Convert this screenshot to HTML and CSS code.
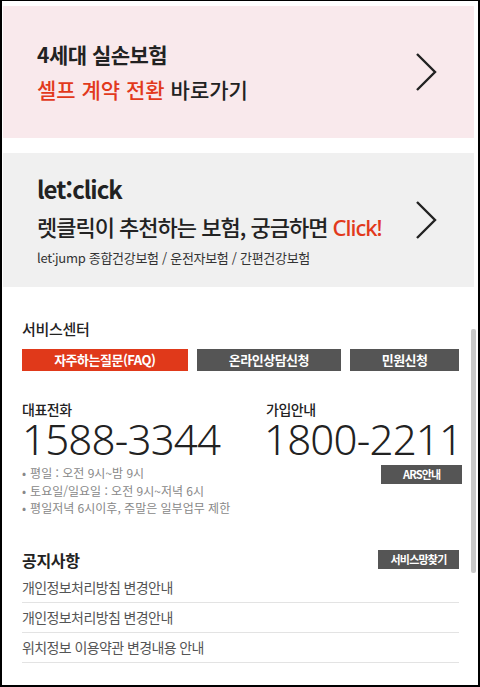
FILE: index.html
```html
<!DOCTYPE html>
<html lang="ko">
<head>
  <meta charset="UTF-8">
  <title>고객센터</title>
  <link rel="stylesheet" href="styles.css">
</head>
<body>
  <div class="frame">
    <a class="promo promo-pink" href="#">
      <div class="promo-text">
        <p class="promo-title">4세대 실손보험</p>
        <p class="promo-line"><span class="red">셀프 계약 전환</span> 바로가기</p>
      </div>
      <svg class="chevron" width="22" height="40" viewBox="0 0 22 40"><polyline points="2,2 20,20 2,38" fill="none" stroke="#222" stroke-width="2.4"/></svg>
    </a>

    <a class="promo promo-gray" href="#">
      <div class="promo-text">
        <p class="brand">let:click</p>
        <p class="promo-big">렛클릭이 추천하는 보험, 궁금하면 <span class="red click">Click!</span></p>
        <p class="promo-sub">let:jump 종합건강보험 / 운전자보험 / 간편건강보험</p>
      </div>
      <svg class="chevron" width="22" height="40" viewBox="0 0 22 40"><polyline points="2,2 20,20 2,38" fill="none" stroke="#222" stroke-width="2.4"/></svg>
    </a>

    <section class="service">
      <h2 class="section-title">서비스센터</h2>
      <div class="tabs">
        <a class="tab tab-active" href="#">자주하는질문(FAQ)</a>
        <a class="tab" href="#">온라인상담신청</a>
        <a class="tab" href="#">민원신청</a>
      </div>

      <div class="phones">
        <div class="phone">
          <h3 class="phone-label">대표전화</h3>
          <p class="number">1588-3344</p>
          <ul class="hours">
            <li>평일 : 오전 9시~밤 9시</li>
            <li>토요일/일요일 : 오전 9시~저녁 6시</li>
            <li>평일저녁 6시이후, 주말은 일부업무 제한</li>
          </ul>
        </div>
        <div class="phone phone-right">
          <h3 class="phone-label">가입안내</h3>
          <p class="number">1800-2211</p>
          <a class="small-btn" href="#">ARS안내</a>
        </div>
      </div>

      <div class="notice">
        <div class="notice-head">
          <h2 class="section-title bold">공지사항</h2>
          <a class="small-btn" href="#">서비스망찾기</a>
        </div>
        <ul class="notice-list">
          <li>개인정보처리방침 변경안내</li>
          <li>개인정보처리방침 변경안내</li>
          <li>위치정보 이용약관 변경내용 안내</li>
        </ul>
      </div>

      <div class="scroll-thumb"></div>
    </section>
  </div>
</body>
</html>
```

FILE: styles.css
```css
html, body {
  margin: 0;
  padding: 0;
  background: #fff;
}
body {
  font-family: "Noto Sans CJK KR", "Noto Sans", sans-serif;
  color: #222;
}
p, h2, h3, ul {
  margin: 0;
  padding: 0;
}
a {
  text-decoration: none;
  color: inherit;
}
.frame {
  position: relative;
  width: 480px;
  height: 687px;
  box-sizing: border-box;
  border: 2px solid #000;
  border-top-width: 1px;
  padding: 5px 4px 0 1px;
  overflow: hidden;
}
.promo {
  display: flex;
  align-items: center;
  justify-content: space-between;
  padding: 0 37px 0 34px;
}
.promo-pink {
  background: #f9e9ec;
  height: 132px;
}
.promo-gray {
  background: #f0f0f0;
  height: 134px;
  margin-top: 15px;
}
.red {
  color: #e2391c;
}
.promo-title {
  font-size: 21px;
  font-weight: bold;
  line-height: 35px;
  letter-spacing: -0.5px;
}
.promo-line {
  font-size: 21px;
  font-weight: 500;
  line-height: 35px;
}
.brand {
  font-size: 24px;
  font-weight: bold;
  line-height: 34px;
  letter-spacing: -1px;
}
.promo-big {
  font-size: 22px;
  font-weight: 500;
  line-height: 40px;
  letter-spacing: -1px;
}
.click {
  font-family: "Noto Sans", sans-serif;
}
.promo-sub {
  font-size: 13px;
  line-height: 22px;
  letter-spacing: -0.3px;
  color: #333;
}
.chevron {
  flex: none;
}

.service {
  padding: 32px 15px 0 19px;
}
.section-title {
  font-size: 15px;
  font-weight: 500;
  line-height: 20px;
  letter-spacing: -0.3px;
}
.section-title.bold {
  font-weight: bold;
  font-size: 16px;
}
.tabs {
  display: grid;
  grid-template-columns: 166fr 145fr 109fr;
  gap: 9px;
  margin-top: 10px;
}
.tab {
  display: block;
  height: 22px;
  line-height: 22px;
  text-align: center;
  background: #555;
  color: #fff;
  font-size: 13px;
  font-weight: bold;
  letter-spacing: -0.5px;
}
.tab-active {
  background: #e0391a;
}
.phones {
  display: grid;
  grid-template-columns: 242px 1fr;
  margin-top: 30px;
}
.phone-label {
  font-size: 14px;
  font-weight: 500;
  line-height: 16px;
  letter-spacing: -0.5px;
}
.phone-right .phone-label {
  padding-left: 2px;
}
.number {
  font-family: "Noto Sans", sans-serif;
  font-size: 42px;
  font-weight: 300;
  line-height: 40px;
  margin-top: 2px;
  letter-spacing: -0.8px;
  white-space: nowrap;
}
.hours {
  list-style: none;
  margin-top: 5px;
  font-size: 12px;
  line-height: 17.5px;
  color: #888;
}
.hours li::before {
  content: "•";
  margin-right: 4px;
}
.phone-right {
  display: flex;
  flex-direction: column;
  align-items: flex-start;
}
.small-btn {
  display: block;
  width: 81px;
  height: 19px;
  line-height: 19px;
  text-align: center;
  background: #555;
  color: #fff;
  font-size: 11px;
  font-weight: bold;
  letter-spacing: -0.8px;
}
.phone-right .small-btn {
  align-self: flex-end;
  margin-top: 6px;
}
.notice {
  margin-top: 33px;
}
.notice-head {
  display: flex;
  align-items: center;
  justify-content: space-between;
}
.notice-list {
  list-style: none;
  margin-top: 3px;
}
.notice-list li {
  height: 29px;
  line-height: 29px;
  font-size: 14px;
  color: #555;
  letter-spacing: -0.6px;
  border-bottom: 1px solid #e3e3e3;
}
.scroll-thumb {
  position: absolute;
  left: 469px;
  top: 328px;
  width: 5px;
  height: 244px;
  border-radius: 2px;
  background: #c8c8c8;
}
```
